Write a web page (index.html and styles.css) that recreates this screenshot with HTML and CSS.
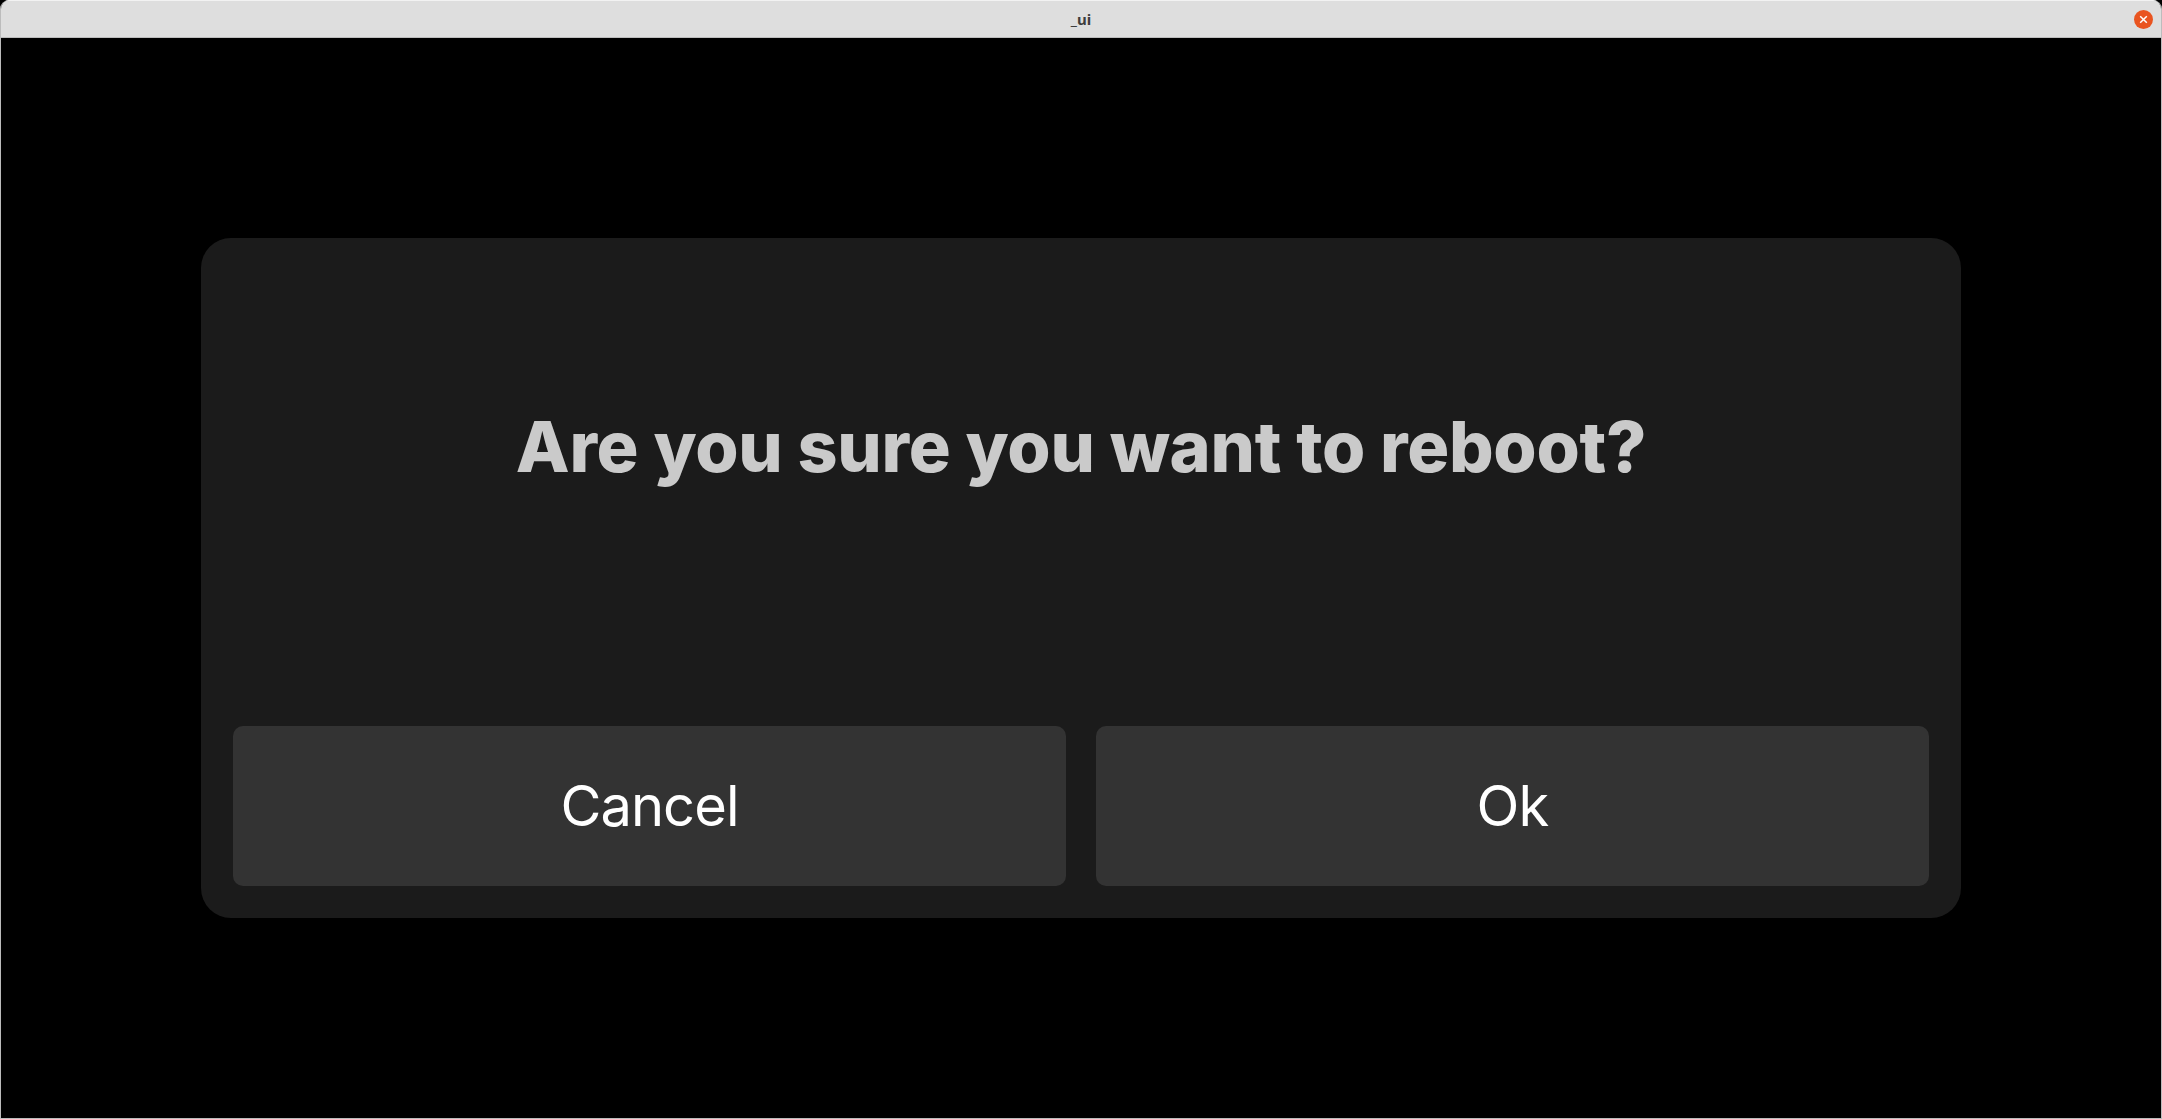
FILE: index.html
```html
<!DOCTYPE html>
<html lang="en">
<head>
    <meta charset="UTF-8">
    <title>_ui</title>
    <link rel="stylesheet" href="styles.css">
</head>
<body>
    <div class="window">
        <div class="titlebar">
            <span class="title">_ui</span>
            <button class="close" aria-label="Close">
                <svg viewBox="0 0 19 19" width="19" height="19">
                    <circle cx="9.5" cy="9.5" r="9.5" fill="#e95420"/>
                    <path d="M6.2 6.2 12.8 12.8M12.8 6.2 6.2 12.8" stroke="#fff" stroke-width="1.5" fill="none"/>
                </svg>
            </button>
        </div>
        <div class="content">
            <div class="dialog">
                <div class="message">Are you sure you want to reboot?</div>
                <div class="actions">
                    <button class="action">Cancel</button>
                    <button class="action">Ok</button>
                </div>
            </div>
        </div>
    </div>
</body>
</html>
```

FILE: styles.css
```css
html, body {
    margin: 0;
    padding: 0;
    height: 100%;
    background: #000;
}
.window {
    height: 100vh;
    box-sizing: border-box;
    display: flex;
    flex-direction: column;
    border: 1px solid #bcbcbc;
    border-top: 0;
    border-radius: 9px 9px 0 0;
    overflow: hidden;
}
.titlebar {
    flex: none;
    display: flex;
    align-items: center;
    justify-content: center;
    position: relative;
    height: 36px;
    background: #dedede;
    border-top: 1px solid #f2f2f2;
    border-bottom: 1px solid #bcbcbc;
}
.title {
    font-family: "Noto Sans", sans-serif;
    font-weight: 700;
    font-size: 15px;
    color: #3d3d3d;
}
.close {
    position: absolute;
    right: 8px;
    top: 9px;
    width: 19px;
    height: 19px;
    padding: 0;
    border: none;
    background: none;
    display: block;
}
.close svg {
    display: block;
}
.content {
    flex: 1;
    display: flex;
    align-items: center;
    justify-content: center;
    background: #000;
}
.dialog {
    width: 1760px;
    height: 680px;
    box-sizing: border-box;
    padding: 32px;
    display: flex;
    flex-direction: column;
    background: #1b1b1b;
    border-radius: 30px;
}
.message {
    flex: 1;
    display: flex;
    align-items: center;
    justify-content: center;
    padding-bottom: 104px;
    font-family: Inter, sans-serif;
    font-weight: 800;
    font-size: 70px;
    letter-spacing: -0.27px;
    color: #cacaca;
}
.actions {
    display: flex;
    gap: 30px;
}
.action {
    flex: 1;
    height: 160px;
    border: none;
    border-radius: 10px;
    background: #333;
    color: #fff;
    font-family: Inter, sans-serif;
    font-size: 56px;
    font-weight: 400;
    letter-spacing: -0.9px;
}
```
